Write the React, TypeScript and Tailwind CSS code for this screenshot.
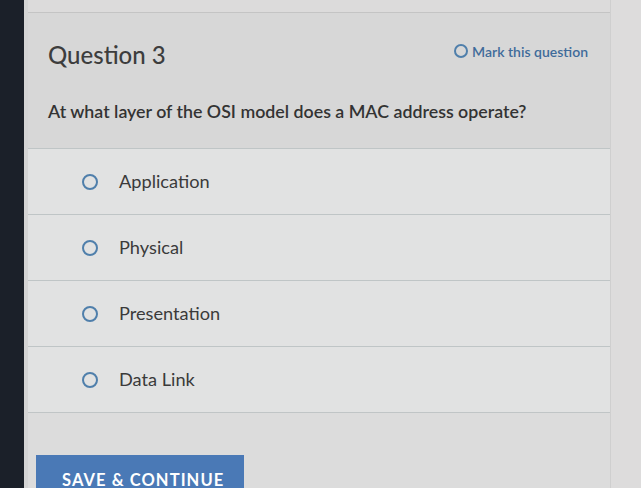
import React from "react";

const options = ["Application", "Physical", "Presentation", "Data Link"];

function Radio({ size = 15 }: { size?: number }) {
  return (
    <span
      className="inline-block shrink-0 rounded-full border-2 border-[#4f7fab]"
      style={{ width: size, height: size }}
    />
  );
}

export default function App() {
  return (
    <div
      className="flex h-[488px] w-[641px] overflow-hidden bg-[#dcdbdb]"
      style={{ fontFamily: "Lato, 'Open Sans', sans-serif" }}
    >
      {/* dark monitor bezel */}
      <div className="w-[24px] shrink-0 bg-[#1b2029]" />
      <div className="w-[4px] shrink-0 bg-[#d4d4d4]" />

      <div className="flex w-[582px] shrink-0 flex-col pt-[12px]">
        <div className="flex flex-1 flex-col border-t border-[#c4c4c4] bg-[#d7d7d7]">
          {/* header */}
          <div className="h-[135px] px-[20px]">
            <div className="flex items-center justify-between pt-[30px] pr-[2px]">
              <h1 className="text-[24px] font-medium leading-none text-[#3d3d3d]">
                Question 3
              </h1>
              <button className="-mt-[8px] flex items-center gap-[4px] text-[14px] font-semibold text-[#3f6b9a]">
                <Radio size={14} />
                Mark this question
              </button>
            </div>
            <p className="mt-[31px] text-[17.8px] font-semibold text-[#333]">
              At what layer of the OSI model does a MAC address operate?
            </p>
          </div>

          {/* options */}
          <div className="bg-[#e1e2e2]">
            {options.map((o) => (
              <label
                key={o}
                className="flex h-[66px] items-center gap-[21px] border-t border-[#bfc5c6] pl-[54px]"
              >
                <Radio size={16} />
                <span className="text-[18.2px] text-[#3a3a3a]">{o}</span>
              </label>
            ))}
          </div>

          {/* footer */}
          <div className="flex-1 border-t border-[#c0c5c6] bg-[#dcdcdc] pl-[8px] pt-[42px]">
            <button className="h-[40px] w-[208px] bg-[#4a79b6] pl-[26px] pt-[10px] text-left text-[16.5px] font-bold uppercase tracking-[0.065em] text-white">
              Save &amp; Continue
            </button>
          </div>
        </div>
      </div>

      <div className="flex-1 border-l border-[#cfcfcf] bg-[#dddcdc]" />
    </div>
  );
}
